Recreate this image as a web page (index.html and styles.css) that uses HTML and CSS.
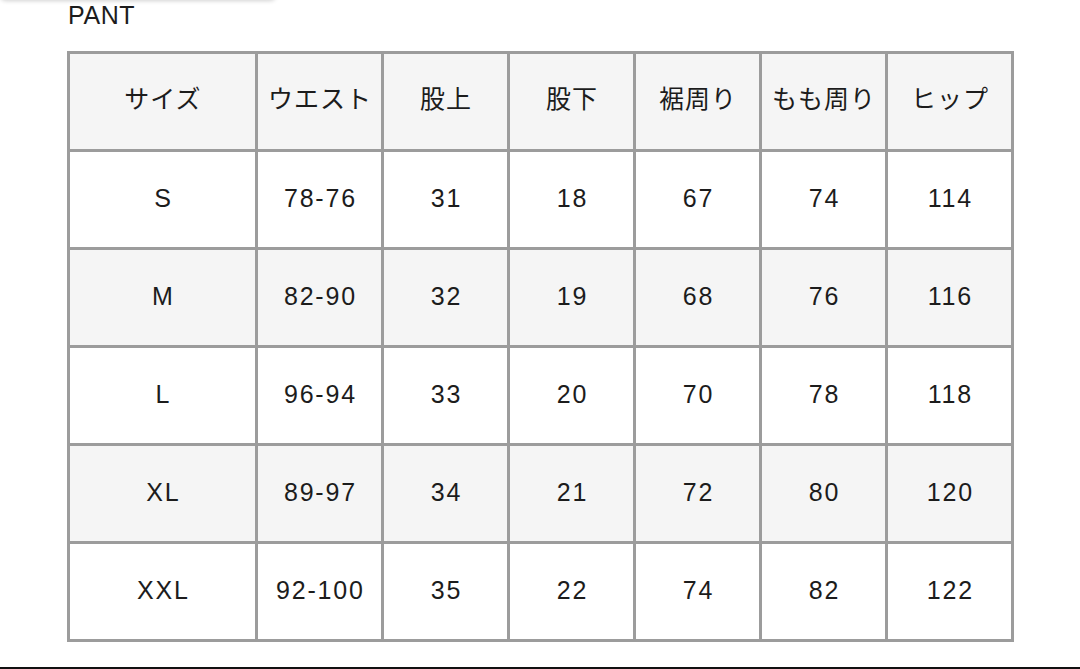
FILE: index.html
```html
<!DOCTYPE html>
<html lang="ja">
<head>
<meta charset="utf-8">
<title>PANT</title>
<link rel="stylesheet" href="styles.css">
</head>
<body>
<div class="top-shadow"></div>
<div class="page">
  <div class="title">PANT</div>
  <div class="size-table">
    <div class="cell head">サイズ</div>
    <div class="cell head">ウエスト</div>
    <div class="cell head">股上</div>
    <div class="cell head">股下</div>
    <div class="cell head">裾周り</div>
    <div class="cell head">もも周り</div>
    <div class="cell head">ヒップ</div>

    <div class="cell">S</div>
    <div class="cell">78-76</div>
    <div class="cell">31</div>
    <div class="cell">18</div>
    <div class="cell">67</div>
    <div class="cell">74</div>
    <div class="cell">114</div>

    <div class="cell alt">M</div>
    <div class="cell alt">82-90</div>
    <div class="cell alt">32</div>
    <div class="cell alt">19</div>
    <div class="cell alt">68</div>
    <div class="cell alt">76</div>
    <div class="cell alt">116</div>

    <div class="cell">L</div>
    <div class="cell">96-94</div>
    <div class="cell">33</div>
    <div class="cell">20</div>
    <div class="cell">70</div>
    <div class="cell">78</div>
    <div class="cell">118</div>

    <div class="cell alt">XL</div>
    <div class="cell alt">89-97</div>
    <div class="cell alt">34</div>
    <div class="cell alt">21</div>
    <div class="cell alt">72</div>
    <div class="cell alt">80</div>
    <div class="cell alt">120</div>

    <div class="cell">XXL</div>
    <div class="cell">92-100</div>
    <div class="cell">35</div>
    <div class="cell">22</div>
    <div class="cell">74</div>
    <div class="cell">82</div>
    <div class="cell">122</div>
  </div>
</div>
<div class="bottom-rule"></div>
</body>
</html>
```

FILE: styles.css
```css
html, body {
  margin: 0;
  padding: 0;
  background: #ffffff;
}

body {
  width: 1080px;
  height: 669px;
  overflow: hidden;
  font-family: "Liberation Sans", Arial, "Noto Sans CJK JP", sans-serif;
  color: #1c1c1c;
  display: flex;
  flex-direction: column;
}

.top-shadow {
  width: 276px;
  height: 8px;
  margin-top: -8px;
  background: #ffffff;
  border-radius: 0 0 6px 6px;
  box-shadow: 0 1px 4px rgba(0, 0, 0, 0.18);
}

.page {
  padding-left: 67px;
  flex: 1;
}

.title {
  font-size: 25px;
  line-height: 30px;
  height: 30px;
  padding-left: 1px;
  letter-spacing: 0.6px;
  margin-bottom: 21px;
}

.size-table {
  display: grid;
  grid-template-columns: 185px repeat(6, 123px);
  grid-auto-rows: 95px;
  gap: 3px;
  padding: 3px;
  background: #9c9c9c;
  width: fit-content;
}

.cell {
  background: #ffffff;
  display: flex;
  align-items: center;
  justify-content: center;
  font-size: 25px;
  letter-spacing: 1.8px;
  padding-left: 1.8px;
  padding-bottom: 3px;
  white-space: nowrap;
}

.cell.head {
  background: #f5f5f5;
  font-family: "Noto Sans CJK JP", "Liberation Sans", sans-serif;
  font-size: 25px;
  letter-spacing: 1px;
  padding-left: 1px;
  padding-bottom: 9px;
}

.cell.alt {
  background: #f5f5f5;
}

.bottom-rule {
  height: 2px;
  background: #111111;
}
```
